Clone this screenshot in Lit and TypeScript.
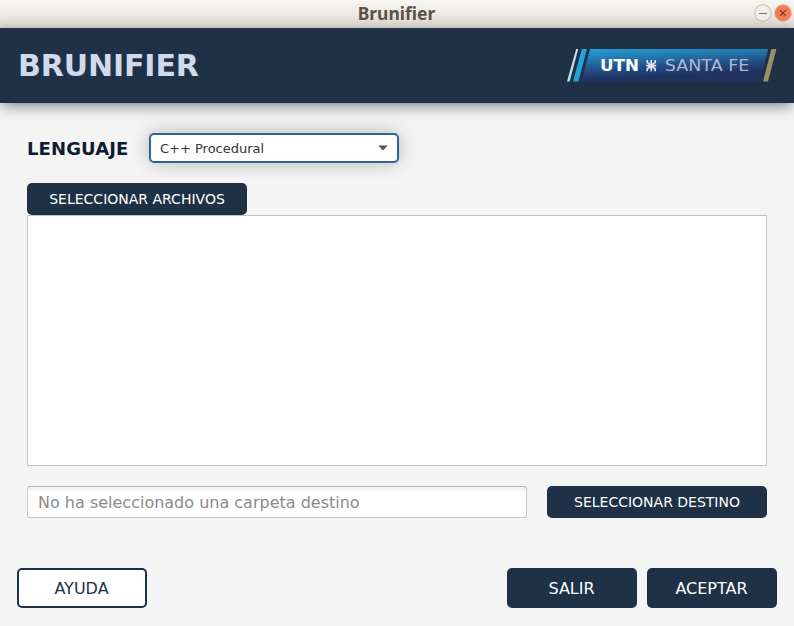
import { LitElement, html, css, svg } from "lit";
import { customElement } from "lit/decorators.js";

@customElement("utn-logo")
class UtnLogo extends LitElement {
  static styles = css`
    :host { display: block; width: 212px; height: 36px; }
    svg { display: block; }
    .utn { font: 700 15px "DejaVu Sans", sans-serif; fill: #fff; }
    .city { font: 400 15px "DejaVu Sans", sans-serif; fill: #b3b5d3; }
    .mark { stroke: #e6e0f2; stroke-width: 1.7; fill: none; }
  `;
  render() {
    return html`<svg width="212" height="36" viewBox="0 0 212 36">
      ${svg`
      <defs>
        <linearGradient id="panel" gradientUnits="userSpaceOnUse" x1="30" y1="1" x2="32" y2="36">
          <stop offset="0" stop-color="#25a5dd"></stop>
          <stop offset="0.3" stop-color="#2380b5"></stop>
          <stop offset="0.68" stop-color="#224b83"></stop>
          <stop offset="0.95" stop-color="#20325f"></stop>
        </linearGradient>
      </defs>
      <path fill="#c4e4f4" d="M10.2 3H12.2L3.6 35.6H1Z"></path>
      <path fill="#25a2da" d="M15.8 3H21L12.4 35.6H7Z"></path>
      <path fill="url(#panel)" d="M24 3H202L194.6 35.6H15.6Z"></path>
      <path fill="#979265" d="M205.4 3H210.4L202 35.6H197Z"></path>
      <text class="utn" x="34" y="25" textLength="39" lengthAdjust="spacingAndGlyphs">UTN</text>
      <path class="mark" d="M85.2 14V25.3M80.2 19.6H90.2M81.2 14V16.3L85.2 19.6L89.2 16.3V14M81.2 25.3V23L85.2 19.6L89.2 23V25.3"></path>
      <text class="city" x="98.8" y="25" textLength="84.5" lengthAdjust="spacingAndGlyphs">SANTA FE</text>`}
    </svg>`;
  }
}

@customElement("app-root")
class AppRoot extends LitElement {
  static styles = css`
    :host {
      display: flex; flex-direction: column; box-sizing: border-box;
      width: 794px; height: 626px; overflow: hidden;
      background: #f4f4f4; color: #1e3147;
      font-family: "DejaVu Sans", sans-serif;
    }
    * { box-sizing: border-box; }
    .titlebar {
      display: grid; grid-template-columns: 1fr auto 1fr; align-items: center;
      height: 28px; flex: none; padding-right: 2px;
      background: linear-gradient(#f7f6f2, #efebe7 45%, #dfd6cf);
    }
    .title {
      grid-column: 2; padding-left: 1px; line-height: 26px; height: 28px;
      font-family: "Noto Sans", sans-serif; font-weight: 700; font-size: 17.5px; color: #5b5248;
    }
    .controls { display: flex; gap: 2px; justify-self: end; margin-top: -2px; }
    .controls svg { display: block; }
    .banner {
      display: flex; justify-content: space-between; align-items: center;
      height: 75px; flex: none; padding: 0 16px 0 18px; z-index: 1;
      background: #1e3147; box-shadow: 0 4px 14px -2px rgba(20, 32, 55, 0.6);
    }
    .banner utn-logo { margin-bottom: 4px; }
    .brand { margin: 0; font-size: 30px; line-height: 36px; font-weight: 700; letter-spacing: -0.12px; color: #d0daea; }
    .content { padding: 30px 27px 0; }
    .language { display: flex; align-items: center; height: 30px; }
    .label { width: 122px; font-size: 18px; font-weight: 700; letter-spacing: 0.1px; color: #0d1b33; }
    .combo {
      display: flex; align-items: center; justify-content: space-between;
      width: 250px; height: 30px; padding: 0 9px; font-size: 13px; color: #333;
      background: #fff; border: 2px solid #30639b; border-radius: 5px;
      box-shadow: 0 0 18px rgba(0, 0, 0, 0.26);
    }
    .btn {
      display: flex; align-items: center; justify-content: center;
      margin: 0; padding: 0; border: 0; border-radius: 5px;
      background: #1e3147; color: #fff; font: 14px "DejaVu Sans", sans-serif;
    }
    .wide { width: 220px; height: 32px; }
    .files { margin-top: 20px; }
    .list { height: 251px; background: #fff; border: 1px solid #c4c4c4; }
    .target { display: flex; justify-content: space-between; margin-top: 20px; }
    .field {
      display: flex; align-items: center; width: 500px; height: 32px; padding: 0 10px;
      font-size: 16px; color: #8b8b8b; border: 1px solid #c8c8c8; border-top-color: #b5b5b5;
      border-radius: 3px; background: linear-gradient(#ededed, #fff 5px);
    }
    .actions { display: flex; gap: 10px; margin: 50px 17px 0; }
    .large { width: 130px; height: 40px; padding-right: 1px; font-size: 16px; }
    .outline { margin-right: auto; background: #fff; border: 2px solid #1e3147; color: #1e3147; }
  `;
  render() {
    return html`
      <div class="titlebar">
        <div class="title">Brunifier</div>
        <div class="controls">
          <svg width="18" height="18" viewBox="0 0 18 18">
            <circle cx="9" cy="9" r="8.3" fill="#f1eeea" stroke="#c2bbb3"></circle>
            <path d="M5 9.5H13" stroke="#77716a"></path>
          </svg>
          <svg width="18" height="18" viewBox="0 0 18 18">
            <circle cx="9" cy="9" r="8.3" fill="#f47c50" stroke="#cfb0a0"></circle>
            <path d="M6.2 6.2L11.8 11.8M11.8 6.2L6.2 11.8" stroke="#743b26" stroke-width="1.2"></path>
          </svg>
        </div>
      </div>
      <header class="banner">
        <h1 class="brand">BRUNIFIER</h1>
        <utn-logo></utn-logo>
      </header>
      <main class="content">
        <div class="language">
          <div class="label">LENGUAJE</div>
          <div class="combo">
            <span>C++ Procedural</span>
            <svg width="10" height="6" viewBox="0 0 10 6"><path d="M0.3 0.5H9.7L5 5.5Z" fill="#555"></path></svg>
          </div>
        </div>
        <button class="btn wide files">SELECCIONAR ARCHIVOS</button>
        <div class="list"></div>
        <div class="target">
          <div class="field">No ha seleccionado una carpeta destino</div>
          <button class="btn wide">SELECCIONAR DESTINO</button>
        </div>
      </main>
      <footer class="actions">
        <button class="btn large outline">AYUDA</button>
        <button class="btn large">SALIR</button>
        <button class="btn large">ACEPTAR</button>
      </footer>
    `;
  }
}
